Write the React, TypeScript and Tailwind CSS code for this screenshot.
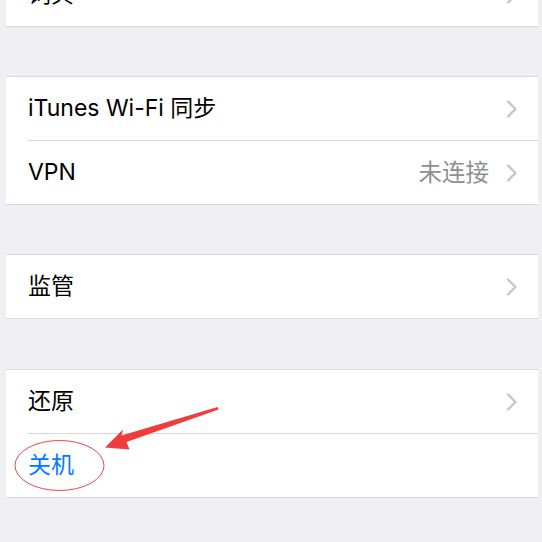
import React from 'react'

const Chevron = () => (
  <svg width="12" height="18" viewBox="0 0 12 18" className="shrink-0">
    <path d="M2 1.5 L9.5 9 L2 16.5" fill="none" stroke="#c7c7cc" strokeWidth="2.4" strokeLinecap="round" strokeLinejoin="round" />
  </svg>
)

const Row = ({
  label,
  detail,
  chevron = true,
  blue = false,
  divider = false,
}: {
  label: string
  detail?: string
  chevron?: boolean
  blue?: boolean
  divider?: boolean
}) => (
  <div className="flex flex-col">
    <div className="flex h-[63px] items-center pl-[22px] pr-[20px]">
      <span className={blue ? 'flex-1 text-[23px] text-[#007aff]' : 'flex-1 text-[23px] text-black'}>{label}</span>
      {detail && <span className="mr-[17px] text-[23.5px] text-[#8e8e93]">{detail}</span>}
      {chevron && <Chevron />}
    </div>
    {divider && <div className="ml-[21px] h-px bg-[#d8d8dc]" />}
  </div>
)

const Card = ({ children, className }: { children: React.ReactNode; className?: string }) => (
  <div className={`border-y border-[#d8d8dc] bg-white ${className || ''}`}>{children}</div>
)

export default function App() {
  return (
    <div
      className="relative h-[542px] w-[542px] overflow-hidden bg-[#efeff4] pl-[6px] pr-[4px]"
      style={{ fontFamily: 'Inter, "Noto Sans CJK SC", sans-serif' }}
    >
      <Card className="-mt-[37px] border-t-0">
        <Row label="词典" />
      </Card>
      <Card className="mt-[49px]">
        <Row label="iTunes Wi-Fi 同步" divider />
        <Row label="VPN" detail="未连接" />
      </Card>
      <Card className="mt-[49px]">
        <Row label="监管" />
      </Card>
      <Card className="mt-[50px]">
        <Row label="还原" divider />
        <Row label="关机" blue chevron={false} />
      </Card>

      <svg className="pointer-events-none absolute left-0 top-0" width="542" height="542" viewBox="0 0 542 542">
        <ellipse cx="59.5" cy="465.5" rx="44.5" ry="25" fill="none" stroke="#e8474a" strokeWidth="1" />
        <polygon
          points="217.5,407 218.5,409.5 126.5,442 129.5,449.5 105,447.5 123,429.5 121.5,435.5"
          fill="#f23c3c"
        />
      </svg>
    </div>
  )
}
